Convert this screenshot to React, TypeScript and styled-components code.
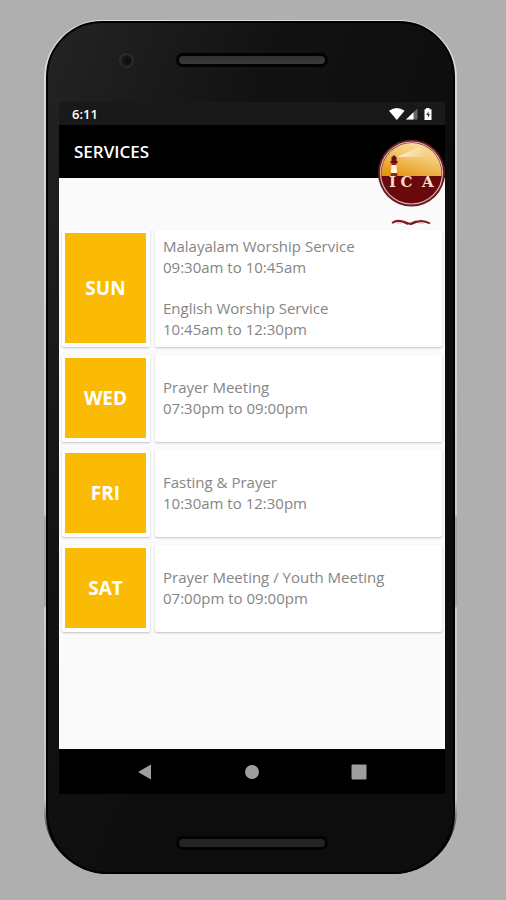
import React from "react";
import styled, { createGlobalStyle } from "styled-components";

const GlobalStyle = createGlobalStyle`
  * { box-sizing: border-box; }
  body { margin: 0; background: #afafaf; font-family: "Open Sans", "Noto Sans", sans-serif; }
  h1, h2, p, ul { margin: 0; padding: 0; font-weight: inherit; }
`;

const Page = styled.div`
  display: flex;
  min-height: 100vh;
  padding: 20px 49px 26px 44px;
`;

const Phone = styled.div`
  flex: 1;
  min-width: 0;
  display: flex;
  flex-direction: column;
  padding: 1px 2px 0;
  border-radius: 58px 58px 64px 64px;
  background: linear-gradient(#dedede 0, #d8d8d8 60px, #cccccc 495px, #a4a4a4 497px, #a4a4a4 586px, #cccccc 588px, #c4c4c4 780px, #111 820px);
`;

const Body = styled.div`
  flex: 1;
  display: flex;
  flex-direction: column;
  padding: 0 8px 0 11px;
  border: 2px solid #010101;
  border-radius: 56px 56px 62px 62px;
  background: linear-gradient(112deg, #242424 0, #121212 220px, #0d0d0d 420px);
`;

const Bezel = styled.div<{ $bottom?: boolean }>`
  display: grid;
  grid-template-columns: 1fr auto 1fr;
  align-items: center;
  height: ${(p) => (p.$bottom ? 78 : 79)}px;
  padding: ${(p) => (p.$bottom ? "20px 0 0" : "0 0 5px")};
`;

const Camera = styled.span`
  grid-column: 1;
  width: 15px;
  height: 15px;
  margin-left: 60px;
  border: 2px solid #2b2b2e;
  border-radius: 50%;
  background: radial-gradient(circle at 60% 50%, #0e0e12 20%, #1c1c22 75%);
`;

const Speaker = styled.span<{ $dim?: boolean }>`
  grid-column: 2;
  width: 152px;
  height: 14px;
  border: 3px solid #020202;
  border-radius: 7px;
  background: ${(p) => (p.$dim ? "#242424" : "linear-gradient(#303030, #3b3b3b)")};
`;

const Screen = styled.div`
  flex: 1;
  display: flex;
  flex-direction: column;
  position: relative;
`;

const StatusBar = styled.div`
  display: flex;
  align-items: center;
  justify-content: space-between;
  height: 23px;
  padding: 1px 12px 0 13px;
  background: #191919;
  color: #fff;
  font-size: 13px;
  font-weight: 600;
`;

const StatusIcons = styled.svg`
  width: 44px;
  height: 14px;
`;

const AppBar = styled.header`
  display: flex;
  align-items: center;
  height: 53px;
  padding: 0 15px;
  background: #000;
  color: #fff;
`;

const Title = styled.h1`
  font-size: 17px;
  font-weight: 600;
`;

const Content = styled.main`
  flex: 1;
  padding: 52px 3px 20px;
  background: #fafafa;
`;

const List = styled.ul`
  display: grid;
  gap: 8px;
  list-style: none;
`;

const Row = styled.li`
  display: grid;
  grid-template-columns: 88px 1fr;
  gap: 5px;
  min-height: 87px;
`;

const Card = styled.div`
  display: flex;
  border-radius: 2px;
  background: #fff;
  box-shadow: 0 1px 2px rgba(0, 0, 0, 0.22);
`;

const DayCard = styled(Card)`
  padding: 3px 4px 4px 3px;
`;

const Day = styled.h2`
  flex: 1;
  display: flex;
  align-items: center;
  justify-content: center;
  background: #fbbb05;
  color: #fff;
  font-size: 19px;
  font-weight: 700;
`;

const Details = styled(Card)`
  flex-direction: column;
  justify-content: center;
  gap: 21px;
  padding: 6px 8px 8px;
  color: #858585;
  font-size: 15px;
  font-weight: 400;
`;

const Name = styled.p`
  line-height: 21px;
`;

const Time = styled.p`
  line-height: 20px;
`;

const NavBar = styled.nav`
  display: grid;
  grid-template-columns: repeat(3, 107px);
  justify-content: center;
  height: 45px;
  background: #000;
`;

const NavButton = styled.button`
  display: grid;
  place-items: center;
  padding: 0;
  border: 0;
  background: none;
  color: #9e9e9e;
  cursor: pointer;
`;

const Logo = styled.svg`
  position: absolute;
  top: 37px;
  right: 0;
  width: 68px;
  height: 87px;
`;

type Service = { name: string; time: string };

const schedule: { day: string; services: Service[] }[] = [
  {
    day: "SUN",
    services: [
      { name: "Malayalam Worship Service", time: "09:30am to 10:45am" },
      { name: "English Worship Service", time: "10:45am to 12:30pm" },
    ],
  },
  { day: "WED", services: [{ name: "Prayer Meeting", time: "07:30pm to 09:00pm" }] },
  { day: "FRI", services: [{ name: "Fasting & Prayer", time: "10:30am to 12:30pm" }] },
  { day: "SAT", services: [{ name: "Prayer Meeting / Youth Meeting", time: "07:00pm to 09:00pm" }] },
];

function ChurchLogo() {
  return (
    <Logo viewBox="0 0 68 87" role="img" aria-label="ICA">
      <defs>
        <linearGradient id="sky" x1="0.8" y1="0" x2="0.25" y2="1">
          <stop offset="0" stopColor="#fbe6b4" />
          <stop offset="0.45" stopColor="#f4c874" />
          <stop offset="1" stopColor="#e59410" />
        </linearGradient>
        <linearGradient id="beam" x1="0" y1="0" x2="1" y2="0">
          <stop offset="0" stopColor="#fffbe8" stopOpacity="0.8" />
          <stop offset="1" stopColor="#fffbe8" stopOpacity="0" />
        </linearGradient>
        <clipPath id="disc">
          <circle cx="34.5" cy="34" r="30" />
        </clipPath>
      </defs>
      <circle cx="34.5" cy="34" r="33.5" fill="#6b1a20" />
      <circle cx="34.5" cy="34" r="31" fill="none" stroke="#d9bab2" strokeWidth="1.2" />
      <g clipPath="url(#disc)">
        <rect width="68" height="37" fill="url(#sky)" />
        <path d="M20 18 L42 8 L52 18 Z" fill="url(#beam)" />
        <rect y="37" width="68" height="32" fill="#6a090c" />
      </g>
      <path d="M14.5 18.5 L17 16 L19.5 18.5 V22 H14.5 Z" fill="#641014" />
      <path d="M13.5 22 H20.5 V24 H13.5 Z" fill="#641014" />
      <path d="M14.5 24 H19.5 V26 H14.5 Z" fill="#a3151a" />
      <path d="M14.5 26 H19.5 L20 34 H14 Z" fill="#fff4dc" />
      <path d="M14 34 H20 L20.4 37 H13.6 Z" fill="#8a2a18" />
      <g fill="#f7dec9" fontFamily="'DejaVu Serif', serif" fontSize="15" fontWeight="700">
        <text x="12" y="48">I</text>
        <text x="23.5" y="48">C</text>
        <text x="45" y="48">A</text>
      </g>
      <path d="M15 84 Q21 80 28 83.5 L31 85 M26 82.5 L33 85 L39 82.5 M34 85 Q44 79.5 53 84.5" fill="none" stroke="#7b1d27" strokeWidth="2" />
      <path d="M20 84 H25 M41 84 H47" stroke="#d8b0b0" strokeWidth="1" />
    </Logo>
  );
}

export default function App() {
  return (
    <>
      <GlobalStyle />
      <Page>
        <Phone>
          <Body>
            <Bezel>
              <Camera />
              <Speaker />
            </Bezel>
            <Screen>
              <StatusBar>
                <time>6:11</time>
                <StatusIcons viewBox="0 0 44 14" aria-hidden="true">
                  <path d="M0 3.8 Q7.8 -2 15.6 3.8 L7.8 13 Z" fill="#fff" />
                  <path d="M28.5 1.5 V12.5 H17 Z" fill="#666" />
                  <path d="M24.5 5.3 V12.5 H17 Z" fill="#fff" />
                  <path d="M37 1 H40.5 V2.3 H42.5 V13 H35.5 V2.3 H37 Z" fill="#fff" />
                  <path d="M39.6 4.2 L37.2 8 H38.8 V11 L41 7 H39.6 Z" fill="#333" />
                </StatusIcons>
              </StatusBar>
              <AppBar>
                <Title>SERVICES</Title>
              </AppBar>
              <Content>
                <List>
                  {schedule.map(({ day, services }) => (
                    <Row key={day}>
                      <DayCard>
                        <Day>{day}</Day>
                      </DayCard>
                      <Details>
                        {services.map((s) => (
                          <div key={s.name}>
                            <Name>{s.name}</Name>
                            <Time>{s.time}</Time>
                          </div>
                        ))}
                      </Details>
                    </Row>
                  ))}
                </List>
              </Content>
              <NavBar>
                <NavButton aria-label="Back">
                  <svg width="16" height="16" viewBox="0 0 16 16">
                    <path d="M1 8 L14 0.5 V15.5 Z" fill="currentColor" />
                  </svg>
                </NavButton>
                <NavButton aria-label="Home">
                  <svg width="16" height="16" viewBox="0 0 16 16">
                    <circle cx="8" cy="8" r="7" fill="currentColor" />
                  </svg>
                </NavButton>
                <NavButton aria-label="Recent apps">
                  <svg width="16" height="16" viewBox="0 0 16 16">
                    <rect x="0.5" y="0.5" width="15" height="15" rx="1" fill="currentColor" />
                  </svg>
                </NavButton>
              </NavBar>
              <ChurchLogo />
            </Screen>
            <Bezel $bottom>
              <Speaker $dim />
            </Bezel>
          </Body>
        </Phone>
      </Page>
    </>
  );
}
